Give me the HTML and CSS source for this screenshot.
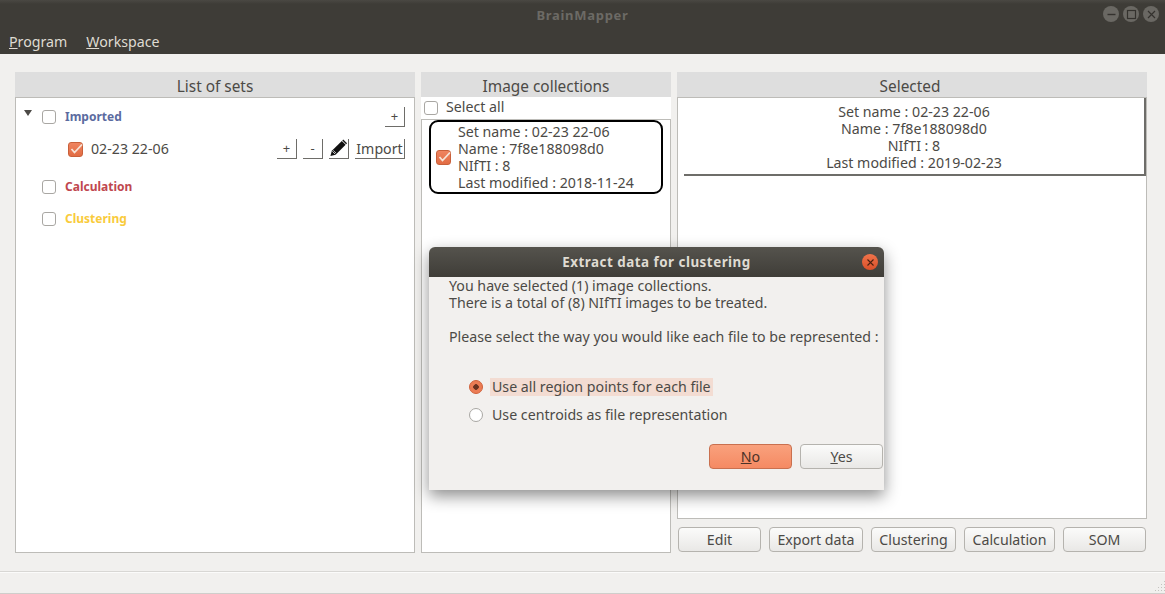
FILE: index.html
```html
<!DOCTYPE html>
<html lang="en">
<head>
    <meta charset="UTF-8">
    <meta name="viewport" content="width=device-width, initial-scale=1.0">
    <title>BrainMapper</title>
    <link rel="stylesheet" href="styles.css">
</head>
<body>
    <header class="topbar">
        <div class="titlebar">
            <span class="app-title">BrainMapper</span>
            <div class="window-buttons">
                <span class="win-btn"><svg width="11" height="11" viewBox="0 0 11 11"><path d="M1.5 5.5h8" stroke="#34322e" stroke-width="1.4"/></svg></span>
                <span class="win-btn"><svg width="11" height="11" viewBox="0 0 11 11"><rect x="1.5" y="1.5" width="8" height="8" fill="none" stroke="#34322e" stroke-width="1.2"/></svg></span>
                <span class="win-btn"><svg width="11" height="11" viewBox="0 0 11 11"><path d="M2 2l7 7M9 2l-7 7" stroke="#34322e" stroke-width="1.2"/></svg></span>
            </div>
        </div>
        <nav class="menubar">
            <span><u>P</u>rogram</span>
            <span><u>W</u>orkspace</span>
        </nav>
    </header>

    <main class="content">
        <section class="column col-sets">
            <h2 class="col-title">List of sets</h2>
            <div class="box tree">
                <div class="tree-row group-row">
                    <span class="arrow"></span>
                    <span class="check"></span>
                    <span class="group-name imported">Imported</span>
                    <button class="flat-btn small">+</button>
                </div>
                <div class="tree-row set-row">
                    <span class="check checked"><svg width="15" height="15" viewBox="0 0 15 15"><path d="M3.500 7l3 3.500L14 2.500" fill="none" stroke="#f6e4d8" stroke-width="1.800"/></svg></span>
                    <span class="set-name">02-23 22-06</span>
                    <button class="flat-btn small">+</button>
                    <button class="flat-btn small">-</button>
                    <button class="flat-btn small pencil"><svg width="20" height="20" viewBox="0 0 20 20"><path d="M1.500 18.500l1.500-5.500L13.500 2.500l4 4L7 17z" fill="#111"/><path d="M3.500 13.500l3 3M4.500 12.500l3 3" stroke="#fff" stroke-width="0.800"/><path d="M14 2l1-1 4 4-1 1z" fill="#111"/></svg></button>
                    <button class="flat-btn import">Import</button>
                </div>
                <div class="tree-row group-row spaced">
                    <span class="arrow-space"></span>
                    <span class="check"></span>
                    <span class="group-name calculation">Calculation</span>
                </div>
                <div class="tree-row group-row">
                    <span class="arrow-space"></span>
                    <span class="check"></span>
                    <span class="group-name clustering">Clustering</span>
                </div>
            </div>
        </section>

        <section class="column col-images">
            <h2 class="col-title">Image collections</h2>
            <label class="select-all">
                <span class="check"></span>
                <span class="select-label">Select all</span>
            </label>
            <div class="box image-list">
                <div class="image-card">
                    <span class="check checked"><svg width="15" height="15" viewBox="0 0 15 15"><path d="M3.500 7l3 3.500L14 2.500" fill="none" stroke="#f6e4d8" stroke-width="1.800"/></svg></span>
                    <div class="card-text">
                        <div>Set name : 02-23 22-06</div>
                        <div>Name : 7f8e188098d0</div>
                        <div>NIfTI : 8</div>
                        <div>Last modified : 2018-11-24</div>
                    </div>
                </div>
            </div>
        </section>

        <section class="column col-selected">
            <h2 class="col-title">Selected</h2>
            <div class="box selected-list">
                <div class="selected-card">
                    <div>Set name : 02-23 22-06</div>
                    <div>Name : 7f8e188098d0</div>
                    <div>NIfTI : 8</div>
                    <div>Last modified : 2019-02-23</div>
                </div>
            </div>
            <div class="actions">
                <button class="btn btn-edit">Edit</button>
                <button class="btn btn-export">Export data</button>
                <button class="btn btn-clustering">Clustering</button>
                <button class="btn btn-calc">Calculation</button>
                <button class="btn btn-som">SOM</button>
            </div>
        </section>
    </main>

    <footer class="statusbar"><span class="grip"></span></footer>

    <div class="dialog">
        <div class="dialog-title">
            <span>Extract data for clustering</span>
            <span class="dialog-close"><svg width="9" height="9" viewBox="0 0 9 9"><path d="M1.500 1.500l6 6M7.500 1.500l-6 6" stroke="#4a2010" stroke-width="1.100"/></svg></span>
        </div>
        <div class="dialog-body">
            <p class="dialog-text">You have selected (1) image collections.<br>There is a total of (8) NIfTI images to be treated.<br><br>Please select the way you would like each file to be represented :</p>
            <div class="radio-group">
                <div class="radio-row">
                    <span class="radio on"></span>
                    <span class="radio-label focused">Use all region points for each file</span>
                </div>
                <div class="radio-row">
                    <span class="radio"></span>
                    <span class="radio-label">Use centroids as file representation</span>
                </div>
            </div>
            <div class="dialog-buttons">
                <button class="btn dialog-btn primary"><u>N</u>o</button>
                <button class="btn dialog-btn"><u>Y</u>es</button>
            </div>
        </div>
    </div>
</body>
</html>
```

FILE: styles.css
```css
* {
    box-sizing: border-box;
}

html, body {
    height: 100%;
}

body {
    margin: 0;
    height: 594px;
    overflow: hidden;
    display: flex;
    flex-direction: column;
    background-color: #f1f0ee;
    color: #4c4a46;
    font-family: "Noto Sans", "Open Sans", sans-serif;
    font-size: 14.2px;
    position: relative;
}

button {
    font-family: inherit;
    font-size: inherit;
    color: inherit;
    padding: 0;
}

/* top window bar */
.topbar {
    height: 54px;
    background-color: #3e3c37;
    background-image: linear-gradient(#4a4843, #3e3c37 4px);
}

.titlebar {
    height: 29px;
    position: relative;
    display: flex;
    align-items: center;
    justify-content: center;
}

.app-title {
    color: #6c6a65;
    font-weight: bold;
    font-size: 13px;
    letter-spacing: 0.7px;
}

.window-buttons {
    position: absolute;
    right: 6px;
    top: 6px;
    display: flex;
    gap: 4px;
}

.win-btn {
    width: 16px;
    height: 16px;
    border-radius: 50%;
    background-color: #6a6863;
    display: flex;
    align-items: center;
    justify-content: center;
}

.menubar {
    display: flex;
    gap: 19px;
    padding: 3px 0 0 9px;
    color: #dfdbd2;
    line-height: 20px;
}

/* three columns */
.content {
    flex: 1;
    display: flex;
    gap: 6px;
    padding: 18px 18px 18px 15px;
    min-height: 0;
}

.column {
    display: flex;
    flex-direction: column;
}

.col-sets {
    width: 400px;
}

.col-images {
    width: 250px;
}

.col-selected {
    width: 470px;
}

.col-title {
    margin: 0;
    height: 25px;
    background-color: #dedede;
    text-align: center;
    font-weight: normal;
    font-size: 15.4px;
    line-height: 29px;
    color: #4c4a46;
}

.col-selected .col-title {
    padding-right: 4px;
}

.box {
    flex: 1;
    background-color: #fff;
    border: 1px solid #bdbcb8;
    min-height: 0;
}

/* checkboxes */
.check {
    width: 14px;
    height: 14px;
    flex: none;
    border: 1px solid #a9a7a3;
    border-radius: 3px;
    background-color: #fff;
    display: inline-flex;
    align-items: center;
    justify-content: center;
}

.check.checked {
    width: 15px;
    height: 15px;
    border-color: #c9603a;
    background-image: linear-gradient(#ef8460, #e26c43);
}

.check.checked svg {
    flex: none;
}

/* tree of sets */
.tree {
    padding-top: 9px;
}

.tree-row {
    display: flex;
    align-items: center;
}

.group-row {
    height: 20px;
    padding: 0 9px 0 8px;
}

.group-row .check {
    margin-left: 10px;
}

.group-name {
    font-size: 12px;
    font-weight: bold;
    margin: 0 0 2px 9px;
    flex: 1;
}

.imported {
    color: #5b6ba0;
}

.calculation {
    color: #c0474f;
}

.clustering {
    color: #f9cb3c;
}

.arrow {
    width: 0;
    height: 0;
    border-left: 4px solid transparent;
    border-right: 4px solid transparent;
    border-top: 6px solid #4c4a46;
    margin-top: -8px;
}

.arrow-space {
    width: 8px;
}

.set-row {
    height: 26px;
    margin-top: 9px;
    padding: 0 9px 0 52px;
    gap: 6px;
}

.set-name {
    flex: 1;
    margin-left: 2px;
    padding-bottom: 2px;
}

.spaced {
    margin-top: 15px;
    margin-bottom: 12px;
}

.flat-btn {
    background: #fff;
    border: none;
    border-right: 1px solid #6e6d69;
    border-bottom: 1px solid #6e6d69;
    height: 20px;
    line-height: 19px;
    font-size: 13px;
    color: #4c4a46;
}

.flat-btn.small {
    width: 20px;
}

.flat-btn.pencil {
    display: flex;
    align-items: flex-end;
    justify-content: center;
    overflow: visible;
}

.flat-btn.import {
    width: 50px;
    font-size: 14.2px;
}

/* image collections */
.select-all {
    height: 22px;
    background-color: #fff;
    display: flex;
    align-items: center;
    gap: 8px;
    padding-left: 3px;
}

.select-label {
    margin-bottom: 4px;
}

.image-list {
    padding: 0 7px;
}

.image-card {
    height: 74px;
    border: 2px solid #000;
    border-radius: 9px;
    display: flex;
    align-items: center;
    gap: 7px;
    padding-left: 5px;
}

.card-text {
    line-height: 17px;
    padding-bottom: 1px;
}

/* selected */
.selected-list {
    display: block;
    padding-left: 6px;
}

.selected-card {
    height: 78px;
    border-right: 2px solid #6e6d69;
    border-bottom: 2px solid #6e6d69;
    text-align: center;
    line-height: 17px;
    padding-top: 5px;
}

.actions {
    display: flex;
    gap: 8px;
    padding: 8px 0 1px 1px;
}

.btn {
    height: 25px;
    border: 1px solid #b5b3ae;
    border-radius: 4px;
    background-image: linear-gradient(#fbfbfa, #e9e8e6);
}

.btn-edit, .btn-som {
    width: 83px;
}

.btn-export {
    width: 94px;
}

.btn-clustering {
    width: 85px;
}

.btn-calc {
    width: 91px;
}

.statusbar {
    height: 23px;
    position: relative;
    border-top: 1px solid #d8d7d4;
    border-bottom: 1px solid #cfcecb;
    box-shadow: inset 0 1px 0 #fbfbfa;
}

.grip {
    position: absolute;
    right: 0;
    bottom: 2px;
    width: 11px;
    height: 11px;
    background-image: radial-gradient(circle, #c4c3bf 0 1px, transparent 1px);
    background-size: 3px 3px;
    clip-path: polygon(100% 0, 100% 100%, 0 100%);
}

/* modal dialog */
.dialog {
    position: absolute;
    left: 429px;
    top: 247px;
    width: 455px;
    height: 243px;
    background-color: #f2f0ee;
    border-radius: 6px 6px 0 0;
    box-shadow: 0 6px 16px rgba(0, 0, 0, 0.45);
}

.dialog-title {
    height: 30px;
    border-radius: 6px 6px 0 0;
    background-image: linear-gradient(#55534d, #3f3d38);
    color: #dfdbd2;
    font-weight: bold;
    font-size: 13.4px;
    letter-spacing: 0.5px;
    text-align: center;
    line-height: 30px;
    position: relative;
}

.dialog-close {
    position: absolute;
    right: 6px;
    top: 7px;
    width: 16px;
    height: 16px;
    border-radius: 50%;
    background-image: linear-gradient(#f0734a, #d9502a);
    display: flex;
    align-items: center;
    justify-content: center;
}

.dialog-body {
    padding: 0 0 0 20px;
}

.dialog-text {
    margin: 0;
    line-height: 17px;
    white-space: nowrap;
}

.radio-group {
    margin-top: 28px;
    padding-left: 20px;
}

.radio-row {
    display: flex;
    align-items: center;
    gap: 7px;
    height: 28px;
}

.radio {
    width: 14px;
    height: 14px;
    flex: none;
    border-radius: 50%;
    border: 1px solid #a9a7a3;
    background-color: #fff;
}

.radio.on {
    border-color: #d0633d;
    background-color: #ec7c54;
    background-image: radial-gradient(circle, #6a3220 0 2.5px, transparent 3px);
}

.radio-label {
    padding: 0 2px;
    line-height: 18px;
}

.radio-label.focused {
    background-color: #f3dcd2;
}

.dialog-buttons {
    display: flex;
    justify-content: flex-end;
    gap: 8px;
    margin-top: 15px;
    padding-right: 1px;
}

.dialog-btn {
    width: 83px;
    height: 25px;
}

.dialog-btn.primary {
    background-image: linear-gradient(#f9a17d, #f58a63);
    border-color: #c9704f;
    color: #4c3328;
}
```
